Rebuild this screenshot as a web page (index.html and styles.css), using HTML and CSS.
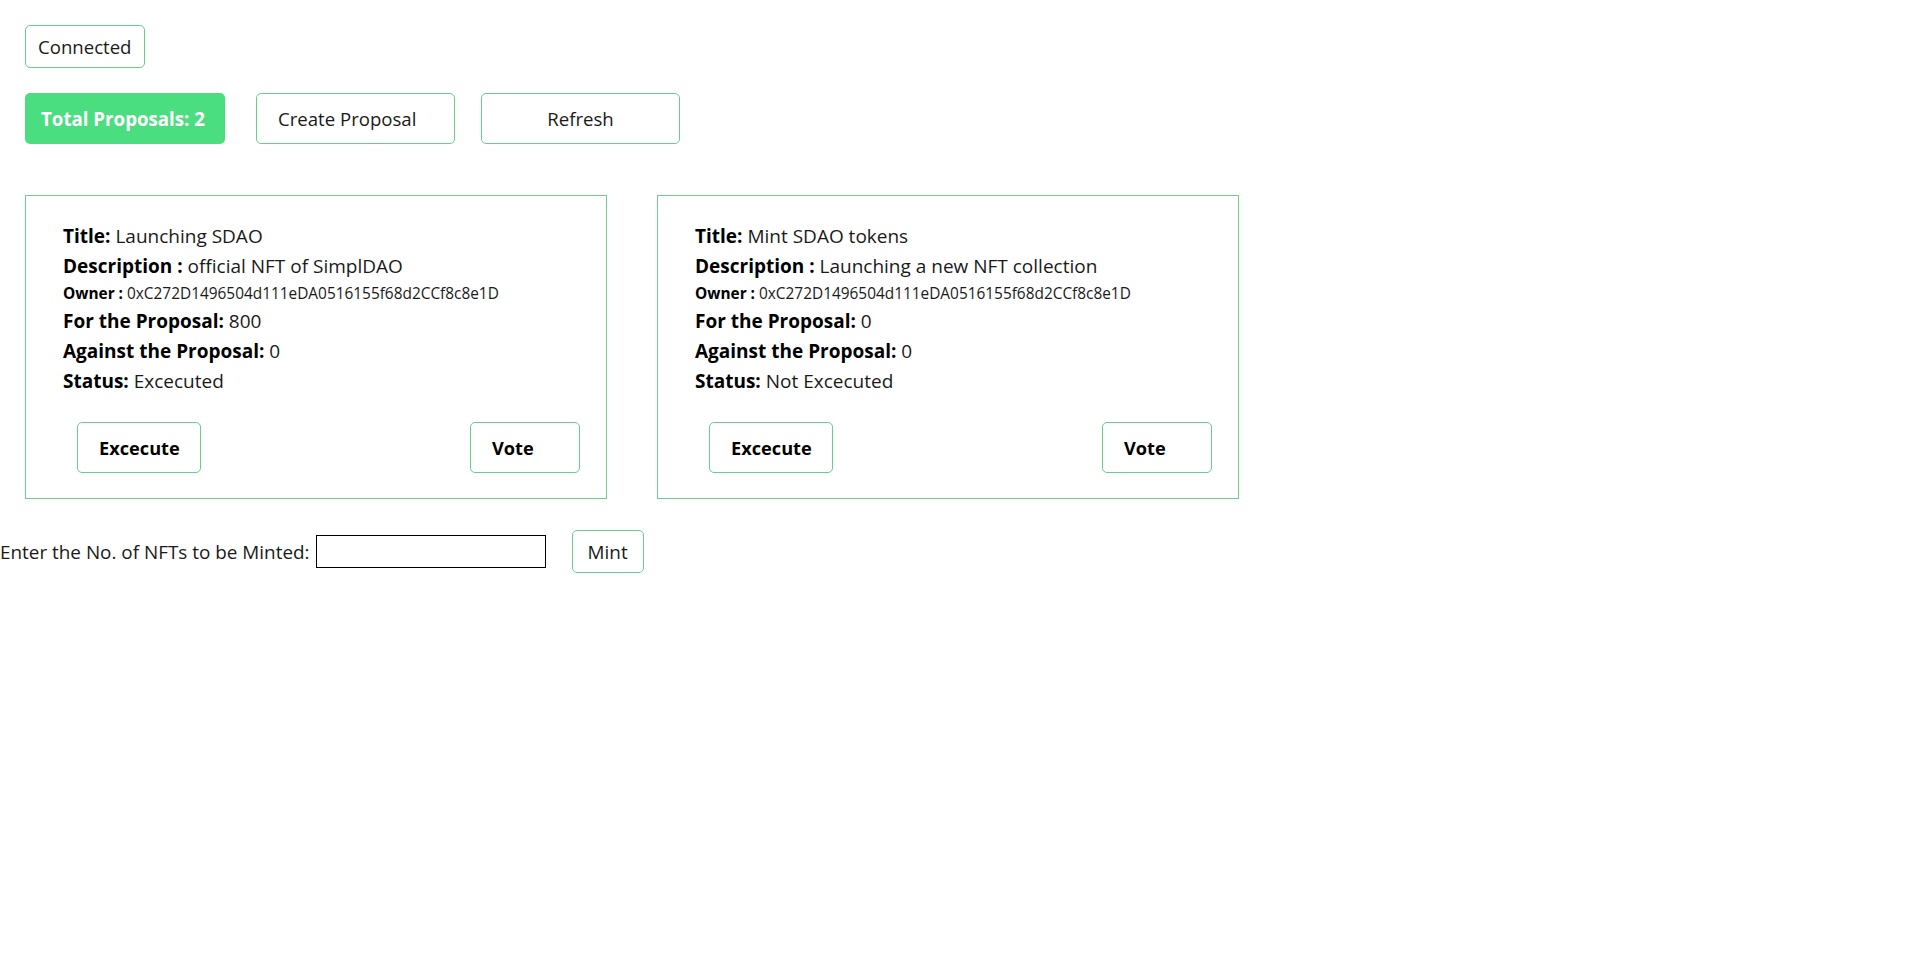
FILE: index.html
```html
<!DOCTYPE html>
<html lang="en">
<head>
<meta charset="utf-8">
<title>SimplDAO</title>
<link rel="stylesheet" href="styles.css">
</head>
<body>
<div class="app">
  <div class="wallet">
    <button class="btn btn-small">Connected</button>
  </div>
  <div class="toolbar">
    <div class="total">Total Proposals: 2</div>
    <button class="btn btn-tool btn-create">Create Proposal</button>
    <button class="btn btn-tool btn-refresh">Refresh</button>
  </div>
  <div class="cards">
    <div class="card">
      <div class="line"><b>Title:</b> Launching SDAO</div>
      <div class="line"><b>Description :</b> official NFT of SimplDAO</div>
      <div class="line owner"><b>Owner :</b> 0xC272D1496504d111eDA0516155f68d2CCf8c8e1D</div>
      <div class="line"><b>For the Proposal:</b> 800</div>
      <div class="line"><b>Against the Proposal:</b> 0</div>
      <div class="line"><b>Status:</b> Excecuted</div>
      <div class="actions">
        <button class="btn btn-card btn-exec">Excecute</button>
        <button class="btn btn-card btn-vote">Vote</button>
      </div>
    </div>
    <div class="card">
      <div class="line"><b>Title:</b> Mint SDAO tokens</div>
      <div class="line"><b>Description :</b> Launching a new NFT collection</div>
      <div class="line owner"><b>Owner :</b> 0xC272D1496504d111eDA0516155f68d2CCf8c8e1D</div>
      <div class="line"><b>For the Proposal:</b> 0</div>
      <div class="line"><b>Against the Proposal:</b> 0</div>
      <div class="line"><b>Status:</b> Not Excecuted</div>
      <div class="actions">
        <button class="btn btn-card btn-exec">Excecute</button>
        <button class="btn btn-card btn-vote">Vote</button>
      </div>
    </div>
  </div>
</div>
<div class="mint-row">
  <label class="mint-label" for="mintCount">Enter the No. of NFTs to be Minted:</label>
  <input class="mint-input" id="mintCount" type="text">
  <button class="btn btn-small btn-mint">Mint</button>
</div>
</body>
</html>
```
FILE: styles.css
```css
* { box-sizing: border-box; }
html, body { margin: 0; padding: 0; background: #fff; }
body {
  font-family: "Open Sans", "Noto Sans", sans-serif;
  color: #1a1a1a;
}
.app { padding: 25px 0 0 25px; }

.btn {
  font-family: inherit;
  color: #1a1a1a;
  background: #fff;
  border: 1px solid #66cf8f;
  border-radius: 5px;
  margin: 0;
  cursor: pointer;
  display: inline-flex;
  align-items: center;
}
.btn-small {
  height: 43px;
  padding: 0 12px;
  font-size: 18.6px;
}
.wallet { display: flex; }

.toolbar {
  display: flex;
  align-items: center;
  margin-top: 25px;
}
.total {
  width: 200px;
  height: 51px;
  background: #4ade80;
  color: #fff;
  font-weight: 700;
  font-size: 18.7px;
  border-radius: 5px;
  padding-left: 16px;
  display: flex;
  align-items: center;
}
.btn-tool {
  width: 199px;
  height: 51px;
  font-size: 18.6px;
}
.btn-create { margin-left: 31px; padding-left: 21px; justify-content: flex-start; }
.btn-refresh { margin-left: 26px; justify-content: center; }

.cards {
  display: flex;
  gap: 50px;
  margin-top: 51px;
}
.card {
  width: 582px;
  border: 1px solid #6ccf95;
  padding: 25px 26px 25px 37px;
}
.line {
  font-size: 19px;
  line-height: 30px;
  color: #1a1a1a;
  white-space: nowrap;
}
.line b { color: #000; font-weight: 700; }
.line.owner { font-size: 15.4px; line-height: 25px; }

.actions {
  display: flex;
  justify-content: space-between;
  margin: 26px 0 0 14px;
}
.btn-card {
  height: 51px;
  font-size: 18.2px;
  font-weight: 700;
  color: #000;
  padding: 0 0 0 21px;
}
.btn-exec { width: 124px; }
.btn-vote { width: 110px; }

.mint-row {
  display: flex;
  align-items: center;
  margin-top: 31px;
}
.mint-label {
  font-size: 18.9px;
  color: #1a1a1a;
}
.mint-input {
  width: 230px;
  height: 33px;
  margin-left: 6px;
  border: 1px solid #000;
  font-family: inherit;
  font-size: 16px;
  padding: 0 4px;
}
.btn-mint {
  margin-left: 26px;
  padding: 0 15px;
  font-size: 18.9px;
}
```
